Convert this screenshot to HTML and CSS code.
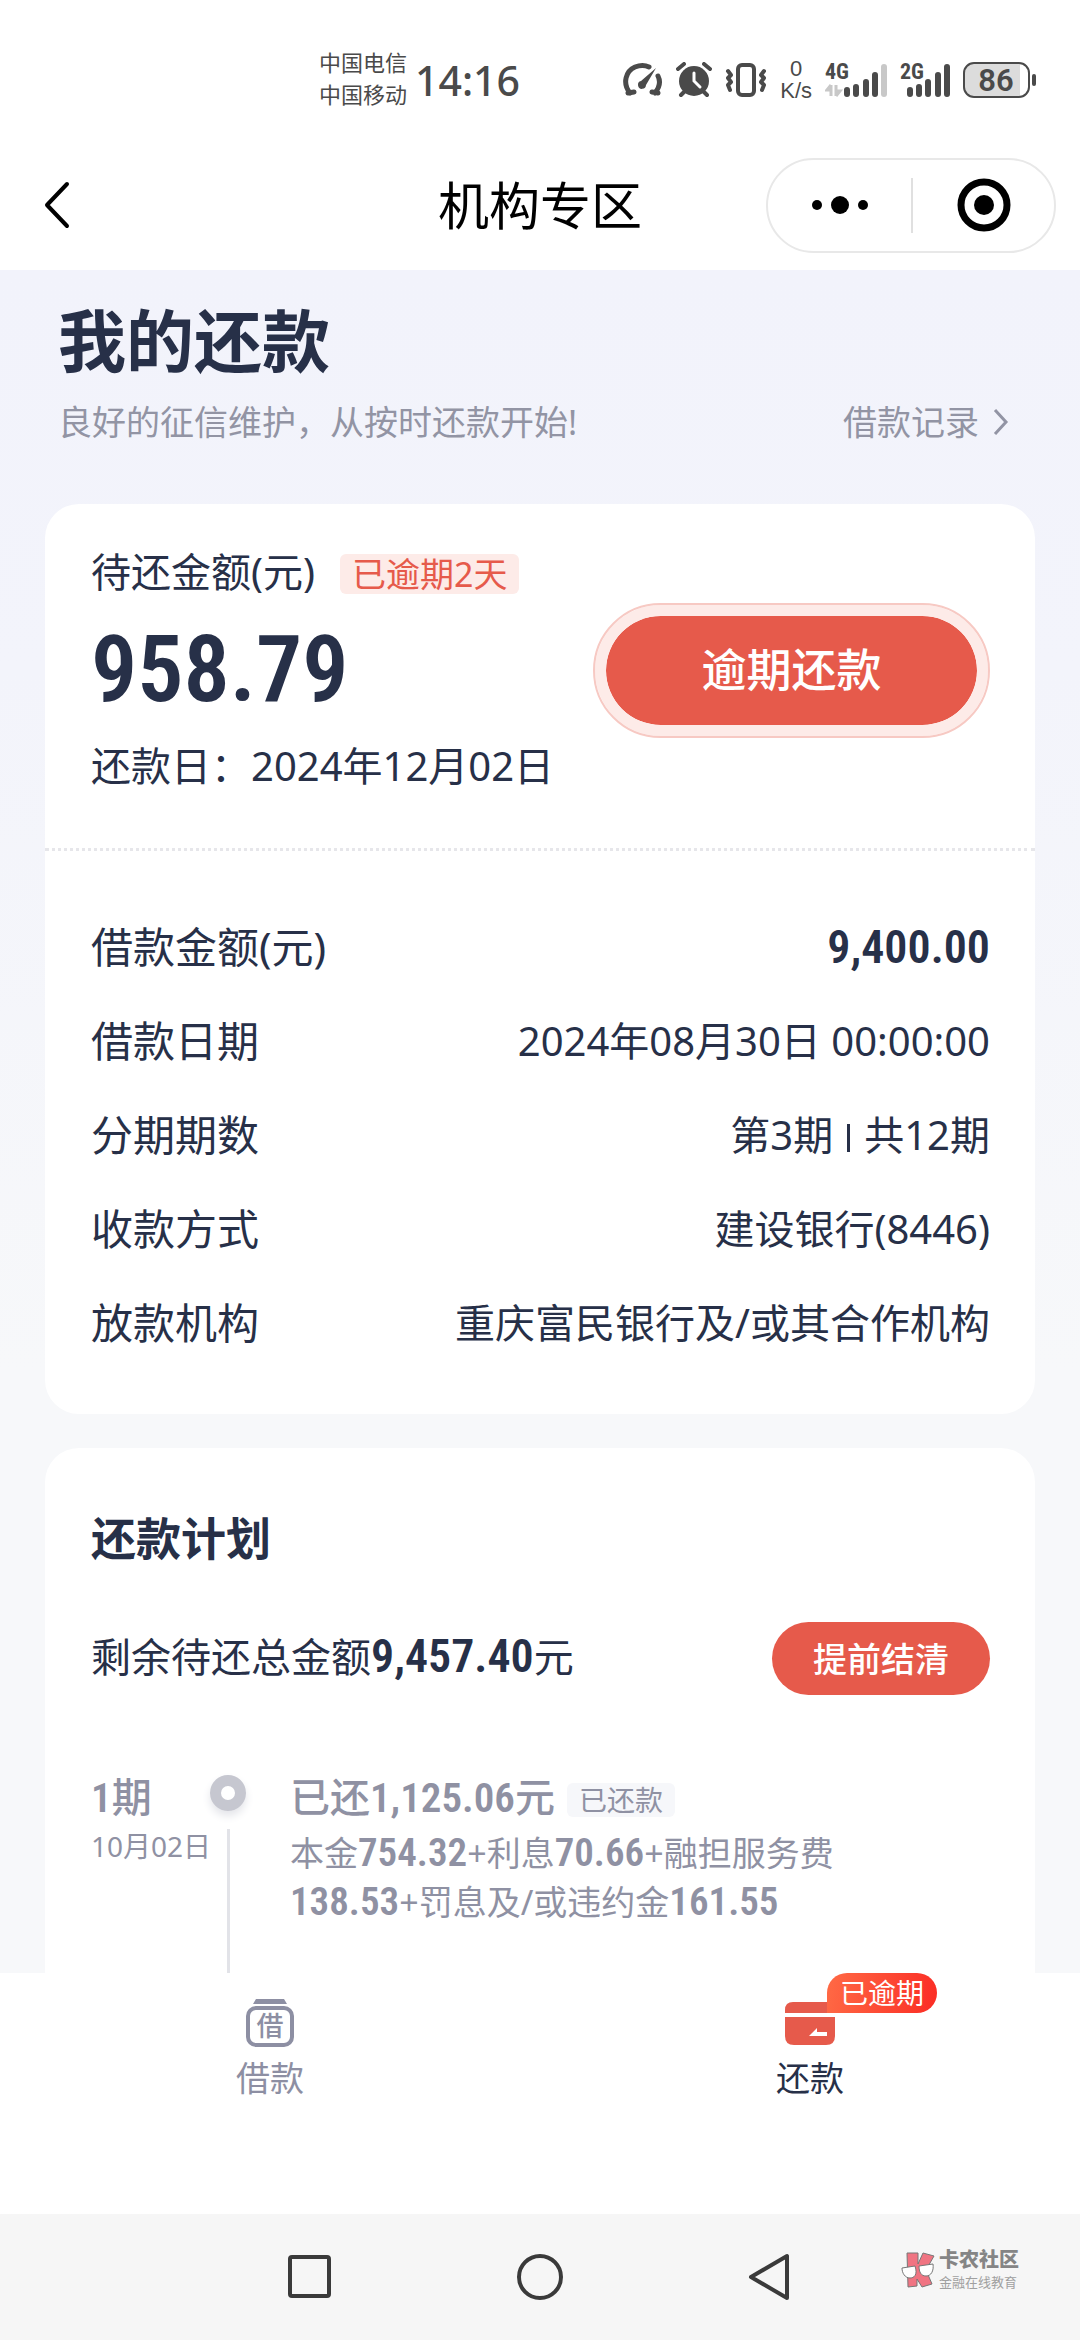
FILE: index.html
```html
<!DOCTYPE html>
<html lang="zh-CN">
<head>
<meta charset="utf-8">
<meta name="viewport" content="width=device-width, initial-scale=1">
<title>机构专区</title>
<link rel="stylesheet" href="styles.css">
</head>
<body>
<div class="app">
  <header class="status">
    <div class="status-left">
      <div class="carriers"><span>中国电信</span><span>中国移动</span></div>
      <time class="clock">14:16</time>
    </div>
    <div class="status-right">
      <svg class="ico-gauge" width="40" height="36" viewBox="0 0 40 36" fill="none" stroke="#4a4a4a" stroke-width="5" stroke-linecap="round">
        <path d="M7 31C-1 21 3 9 12 5c5-2 10-2 14 0M35 14c3 6 1 12-3 17M5 31l6-1M35 31l-6-1"/>
        <path d="M33 6 23 23a4 4 0 1 1-5-4z" fill="#4a4a4a" stroke="none"/>
      </svg>
      <svg class="ico-alarm" width="36" height="36" viewBox="0 0 36 36" fill="none" stroke="#4a4a4a" stroke-width="4" stroke-linecap="round">
        <path d="M2 7l6-5M34 7l-6-5M8 30l-3 3M28 30l3 3"/>
        <circle cx="18" cy="19" r="15" fill="#4a4a4a" stroke="none"/>
        <path d="M18 11v8l6 6" stroke="#fff" stroke-width="3"/>
      </svg>
      <svg class="ico-vibrate" width="42" height="34" viewBox="0 0 42 34" fill="none" stroke="#4a4a4a" stroke-width="4" stroke-linejoin="round" stroke-linecap="round">
        <rect x="13" y="2" width="16" height="30" rx="4"/>
        <path d="M3 8l3 4-3 3 3 4-3 3 2 5M39 8l-3 4 3 3-3 4 3 3-2 5"/>
      </svg>
      <div class="speed"><span>0</span><span>K/s</span></div>
      <div class="signal">
        <span>4G</span>
        <svg width="62" height="38" viewBox="0 0 62 38">
          <path d="M6 24v11M6 24l-4 5h4M11 24v11M11 35l4-5h-4" stroke="#c8c8c8" stroke-width="3" fill="none"/>
          <g stroke="#4a4a4a" stroke-width="6" stroke-linecap="round"><path d="M22 29v4M31 26v7M41 21v12M50 14v19"/><path stroke="#c8c8c8" d="M59 6v27"/></g>
        </svg>
      </div>
      <div class="signal">
        <span>2G</span>
        <svg width="50" height="38" viewBox="0 0 50 38">
          <path d="M10 29v4M19 26v7M28 21v12M38 14v19M47 6v27" stroke="#4a4a4a" stroke-width="6" stroke-linecap="round"/>
        </svg>
      </div>
      <svg class="ico-battery" width="74" height="38" viewBox="0 0 74 38">
        <path d="M11 2h46v34H11a9 9 0 0 1-9-9V11a9 9 0 0 1 9-9z" fill="#dcdcdc"/>
        <rect x="1" y="2" width="65" height="34" rx="10" fill="none" stroke="#4a4a4a" stroke-width="2"/>
        <rect x="69" y="13" width="4" height="12" rx="2" fill="#4a4a4a"/>
        <text x="33" y="30" text-anchor="middle" class="level">86</text>
      </svg>
    </div>
  </header>

  <nav class="navbar">
    <button class="back" aria-label="返回">
      <svg width="28" height="48" viewBox="0 0 28 48" fill="none" stroke="#000" stroke-width="4" stroke-linecap="round" stroke-linejoin="round"><path d="M24 3 4 24l20 21"/></svg>
    </button>
    <h1 class="nav-title">机构专区</h1>
    <div class="capsule">
      <button aria-label="更多"><svg width="60" height="20" viewBox="0 0 60 20"><circle cx="7" cy="10" r="5"/><circle cx="30" cy="10" r="9"/><circle cx="53" cy="10" r="5"/></svg></button>
      <button aria-label="关闭"><svg width="54" height="54" viewBox="0 0 54 54"><circle cx="27" cy="27" r="23" fill="none" stroke="#000" stroke-width="7"/><circle cx="27" cy="27" r="10"/></svg></button>
    </div>
  </nav>

  <main class="content">
    <section class="intro">
      <h2>我的还款</h2>
      <div class="intro-row">
        <p>良好的征信维护，从按时还款开始!</p>
        <a href="#records">借款记录
          <svg width="16" height="28" viewBox="0 0 16 28" fill="none" stroke="#9294a4" stroke-width="3"><path d="M2 2l11 12L2 26"/></svg>
        </a>
      </div>
    </section>

    <section class="card">
      <div class="due">
        <div class="due-info">
          <div class="due-head"><span>待还金额(元)</span><span class="tag-late">已逾期2天</span></div>
          <div class="due-amount num">958.79</div>
          <div class="due-date">还款日：2024年12月02日</div>
        </div>
        <button class="pay">逾期还款</button>
      </div>
      <dl class="details">
        <div><dt>借款金额(元)</dt><dd class="num strong">9,400.00</dd></div>
        <div><dt>借款日期</dt><dd>2024年08月30日 00:00:00</dd></div>
        <div><dt>分期期数</dt><dd class="terms">第3期<i></i>共12期</dd></div>
        <div><dt>收款方式</dt><dd>建设银行(8446)</dd></div>
        <div><dt>放款机构</dt><dd>重庆富民银行及/或其合作机构</dd></div>
      </dl>
    </section>

    <section class="card plan">
      <h3>还款计划</h3>
      <div class="summary">
        <p>剩余待还总金额<span class="num">9,457.40</span>元</p>
        <button class="settle">提前结清</button>
      </div>
      <ol class="timeline">
        <li>
          <div class="when"><strong><span class="num">1</span>期</strong><span>10月02日</span></div>
          <div class="rail"><b></b><i></i></div>
          <div class="what">
            <div class="paid"><strong>已还<span class="num">1,125.06</span>元</strong><span class="tag-paid">已还款</span></div>
            <p>本金<span class="num">754.32</span>+利息<span class="num">70.66</span>+融担服务费<span class="num">138.53</span>+罚息及/或违约金<span class="num">161.55</span></p>
          </div>
        </li>
      </ol>
    </section>
  </main>

  <nav class="tabs">
    <a href="#borrow">
      <svg width="48" height="48" viewBox="0 0 48 48"><path d="M10 0h28l3 5H7z" fill="#8d8fa3"/><rect x="2" y="9" width="44" height="37" rx="8" fill="none" stroke="#8d8fa3" stroke-width="4"/><text x="24" y="37" text-anchor="middle" class="glyph">借</text></svg>
      <span>借款</span>
    </a>
    <a href="#repay" class="active">
      <span class="icon-wrap">
        <svg width="50" height="48" viewBox="0 0 50 48" fill="#e65a4b"><path d="M8 3h34q8 0 8 8v3H0v-3q0-8 8-8z"/><path d="M0 18h50v19q0 9-9 9H9q-9 0-9-9z"/><path d="M24 37l8-8v4h10v4z" fill="#fff"/></svg>
        <em class="badge">已逾期</em>
      </span>
      <span>还款</span>
    </a>
  </nav>

  <footer class="sysnav">
    <button aria-label="最近任务"><svg width="48" height="48" viewBox="0 0 48 48"><rect x="4" y="4" width="39" height="39" rx="2"/></svg></button>
    <button aria-label="主屏幕"><svg width="48" height="48" viewBox="0 0 48 48"><circle cx="24" cy="24" r="21"/></svg></button>
    <button aria-label="后退"><svg width="48" height="48" viewBox="0 0 48 48"><path d="M41 3v42L5 24z"/></svg></button>
    <div class="watermark">
      <svg width="34" height="36" viewBox="0 0 34 36" stroke="#777" stroke-width="1"><path d="M6 1h11v11l5-11 11 3-8 14 6 14-10 3-5-8v7L7 35z" fill="#f07482"/><path d="M1 16l13-2c3 9-1 12-5 12-5 0-8-5-8-10zM18 14l14-2c1 7-2 12-7 12s-7-4-7-10z" fill="#fff"/></svg>
      <div><b>卡农社区</b><span>金融在线教育</span></div>
    </div>
  </footer>
</div>
</body>
</html>
```
FILE: styles.css
```css
* { box-sizing: border-box; margin: 0; padding: 0; }

body {
  font-family: "Noto Sans", "Noto Sans CJK SC", sans-serif;
  font-size: 40px;
  color: #273048;
  background: #fff;
}

button { border: 0; background: none; font: inherit; color: inherit; }
a { color: inherit; text-decoration: none; }
svg { display: block; flex: none; }
ol { list-style: none; }

.num {
  font-family: "Roboto Condensed", "Roboto", sans-serif;
  font-weight: 600;
}

.app { display: flex; flex-direction: column; height: 100vh; }

/* status bar */
.status {
  display: flex;
  justify-content: space-between;
  align-items: center;
  height: 140px;
  padding: 20px 43px 0 319px;
  color: #4a4a4a;
}
.status-left, .status-right { display: flex; align-items: center; }
.status-left { gap: 8px; }
.carriers { display: flex; flex-direction: column; padding-bottom: 4px; font-size: 22px; line-height: 32px; }
.clock { font-size: 41px; line-height: 48px; font-weight: 500; }
.status-right { gap: 13px; }
.speed { display: flex; flex-direction: column; align-items: center; font: 22px/22px "Liberation Sans", sans-serif; }
.signal { display: grid; }
.signal > * { grid-area: 1 / 1; }
.signal span { font: 700 22px/22px "Roboto Condensed", "Roboto", sans-serif; }
.level { font: 600 31px "Roboto", sans-serif; fill: #4a4a4a; }

/* mini-program title bar */
.navbar {
  display: grid;
  grid-template-columns: 1fr auto 1fr;
  align-items: center;
  height: 130px;
  padding: 0 24px;
  color: #000;
}
.back { justify-self: start; padding-left: 19px; }
.nav-title { font-size: 51px; line-height: 64px; font-weight: 400; }
.capsule {
  justify-self: end;
  display: grid;
  grid-template-columns: 1fr 1fr;
  width: 290px;
  height: 95px;
  padding: 18px 0;
  border: 2px solid #e8e8e8;
  border-radius: 48px;
}
.capsule button { display: grid; place-items: center; }
.capsule button + button { border-left: 2px solid #e0e0e0; }

/* scrolling content */
.content {
  flex: 1;
  min-height: 0;
  overflow: hidden auto;
  scrollbar-width: none;
  padding: 0 45px;
  background: linear-gradient(#f2f3fb 0, #f3f4fb 400px, #f7f8fa 1100px);
}
.intro { padding: 35px 13px 56px; }
.intro h2 { font-size: 68px; line-height: 72px; font-weight: 700; }
.intro-row {
  display: flex;
  justify-content: space-between;
  align-items: center;
  padding: 19px 13px 0 0;
  font-size: 34px;
  line-height: 52px;
  color: #9294a4;
}
.intro-row a { display: flex; align-items: center; gap: 14px; }

.card { background: #fff; border-radius: 34px; }
.card + .card { margin-top: 34px; }

.due {
  display: flex;
  justify-content: space-between;
  align-items: center;
  padding: 40px 45px 56px 46px;
  border-bottom: 3px dotted #e6e6ea;
}
.due-head { display: flex; align-items: center; gap: 25px; line-height: 56px; }
.tag-late {
  margin-top: 4px;
  padding: 0 12px;
  border-radius: 6px;
  background: #fdebe8;
  color: #e65a4b;
  font-size: 34px;
  line-height: 40px;
}
.due-amount { font-size: 92px; line-height: 140px; }
.due-date { line-height: 52px; }
.pay {
  width: 397px;
  height: 135px;
  margin-bottom: -4px;
  border: 2px solid #f7c9c3;
  border-radius: 68px;
  padding: 11px;
  background: #e65a4b content-box;
  box-shadow: inset 0 0 0 11px #fdebe8;
  color: #fff;
  font-size: 45px;
  line-height: 56px;
  font-weight: 500;
}

.details { display: grid; gap: 38px; padding: 68px 45px 63px 46px; }
.details div { display: flex; justify-content: space-between; line-height: 56px; }
.details dt { font-size: 42px; }
.details .strong { font-size: 46px; }
.terms { display: flex; align-items: center; gap: 14px; }
.terms i { width: 3px; height: 28px; margin-top: 6px; background: #273048; }

.plan { padding: 61px 45px 60px 46px; }
.plan h3 { font-size: 45px; line-height: 60px; font-weight: 700; }
.summary { display: flex; justify-content: space-between; align-items: center; margin-top: 53px; }
.summary p { line-height: 56px; margin-top: -4px; }
.summary .num { font-size: 46px; line-height: 1; }
.settle {
  width: 218px;
  height: 73px;
  border-radius: 37px;
  background: #e65a4b;
  color: #fff;
  font-size: 34px;
  line-height: 48px;
  font-weight: 500;
}

.timeline { margin-top: 76px; color: #8f91a3; }
.timeline li { display: grid; grid-template-columns: 119px 36px 1fr; min-height: 240px; }
.when { display: flex; flex-direction: column; gap: 3px; font-size: 28px; line-height: 40px; white-space: nowrap; }
.when strong, .paid strong { font-size: 40px; line-height: 52px; font-weight: 500; }
.when .num, .paid .num { font-size: 41px; line-height: 1; }
.rail { display: flex; flex-direction: column; align-items: center; gap: 18px; padding-top: 4px; }
.rail b { width: 36px; height: 36px; border: 11px solid #c6c7d0; border-radius: 50%; box-shadow: 0 5px 8px #e4e5ea; }
.rail i { flex: 1; width: 3px; background: #e2e3e8; }
.what { padding-left: 44px; max-width: 640px; }
.paid { display: flex; align-items: center; gap: 12px; margin-bottom: 6px; }
.tag-paid { margin-top: 6px; padding: 0 12px; border-radius: 6px; background: #f6f7fa; font-size: 28px; line-height: 34px; }
.what p { font-size: 34px; line-height: 49px; }
.what p .num { font-size: 39px; line-height: 1; }

/* tab bar */
.tabs { display: grid; grid-template-columns: 1fr 1fr; height: 241px; padding-top: 26px; background: #fff; z-index: 1; }
.tabs a { display: flex; flex-direction: column; align-items: center; gap: 6px; font-size: 34px; line-height: 50px; color: #8d8fa3; }
.tabs .active { color: #273048; }
.glyph { font: 500 27px "Noto Sans CJK SC", sans-serif; fill: #8d8fa3; }
.icon-wrap { position: relative; }
.badge {
  position: absolute;
  left: 42px;
  top: -26px;
  padding: 0 13px;
  border-radius: 20px 20px 20px 0;
  background: linear-gradient(100deg, #ff6a45, #fb2c24);
  color: #fff;
  font-size: 28px;
  font-style: normal;
  line-height: 40px;
  white-space: nowrap;
}

/* system navigation */
.sysnav {
  position: relative;
  display: flex;
  justify-content: center;
  align-items: center;
  gap: 182px;
  height: 126px;
  background: #f6f6f6;
}
.sysnav button svg { fill: none; stroke: #3a3a3a; stroke-width: 4; stroke-linejoin: round; }
.watermark { position: absolute; right: 61px; top: 34px; display: flex; align-items: center; gap: 4px; color: #858585; }
.watermark div { display: flex; flex-direction: column; }
.watermark b { font-size: 20px; line-height: 24px; font-weight: 900; }
.watermark span { font-size: 13px; line-height: 20px; color: #a0a0a0; }
```
